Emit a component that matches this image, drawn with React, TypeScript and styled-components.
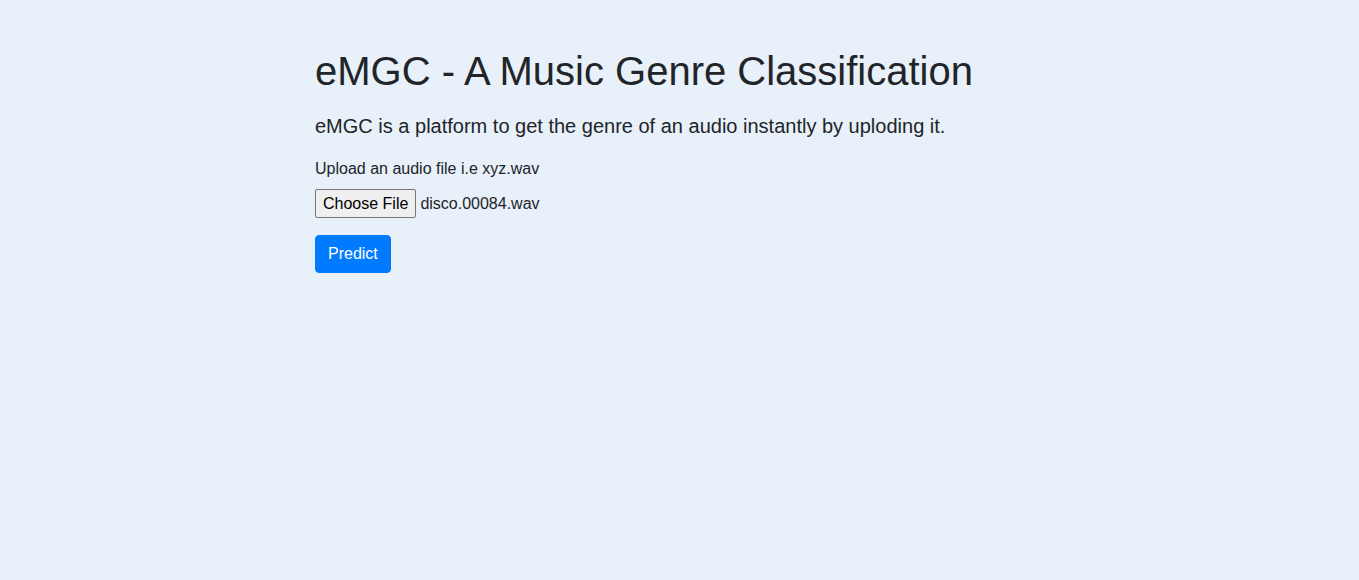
import React from "react";
import styled, { createGlobalStyle } from "styled-components";

const GlobalStyle = createGlobalStyle`
  html, body {
    margin: 0;
    padding: 0;
    background-color: #e8f0f9;
  }

  body {
    font-family: "Liberation Sans", Arial, sans-serif;
    font-size: 16px;
    line-height: 1.5;
    color: #212529;
    min-height: 580px;
  }
`;

const Main = styled.main`
  width: 729px;
  margin: 47px auto 0;
`;

const Title = styled.h1`
  font-size: 40px;
  font-weight: 500;
  line-height: 1.2;
  margin: 0 0 16px;
`;

const Lead = styled.p`
  font-size: 20px;
  font-weight: 300;
  line-height: 30px;
  margin: 0 0 16px;
`;

const Form = styled.form`
  display: flex;
  flex-direction: column;
  align-items: flex-start;
`;

const FormGroup = styled.div`
  margin-bottom: 16px;
`;

const Label = styled.label`
  display: block;
  line-height: 24px;
  margin-bottom: 7px;
`;

const FileRow = styled.div`
  display: flex;
  align-items: center;
  gap: 4px;
  height: 31px;
`;

const FileButton = styled.button`
  font-family: "Liberation Sans", Arial, sans-serif;
  font-size: 16px;
  line-height: 19px;
  height: 29px;
  padding: 0 7px;
  color: #000;
  background-color: #efefef;
  border: 1px solid #767676;
  border-radius: 2px;
  cursor: pointer;
`;

const FileName = styled.span`
  font-size: 16px;
  color: #212529;
`;

const PrimaryButton = styled.button`
  font-family: "Liberation Sans", Arial, sans-serif;
  font-size: 16px;
  line-height: 24px;
  padding: 6px 12px;
  color: #fff;
  background-color: #007bff;
  border: 1px solid #007bff;
  border-radius: 4px;
  cursor: pointer;

  &:hover {
    background-color: #0069d9;
  }
`;

export default function App() {
  return (
    <>
      <GlobalStyle />
      <Main>
        <Title>eMGC - A Music Genre Classification</Title>
        <Lead>eMGC is a platform to get the genre of an audio instantly by uploding it.</Lead>
        <Form onSubmit={(e) => e.preventDefault()}>
          <FormGroup>
            <Label>Upload an audio file i.e xyz.wav</Label>
            <FileRow>
              <FileButton type="button">Choose File</FileButton>
              <FileName>disco.00084.wav</FileName>
            </FileRow>
          </FormGroup>
          <PrimaryButton type="submit">Predict</PrimaryButton>
        </Form>
      </Main>
    </>
  );
}
